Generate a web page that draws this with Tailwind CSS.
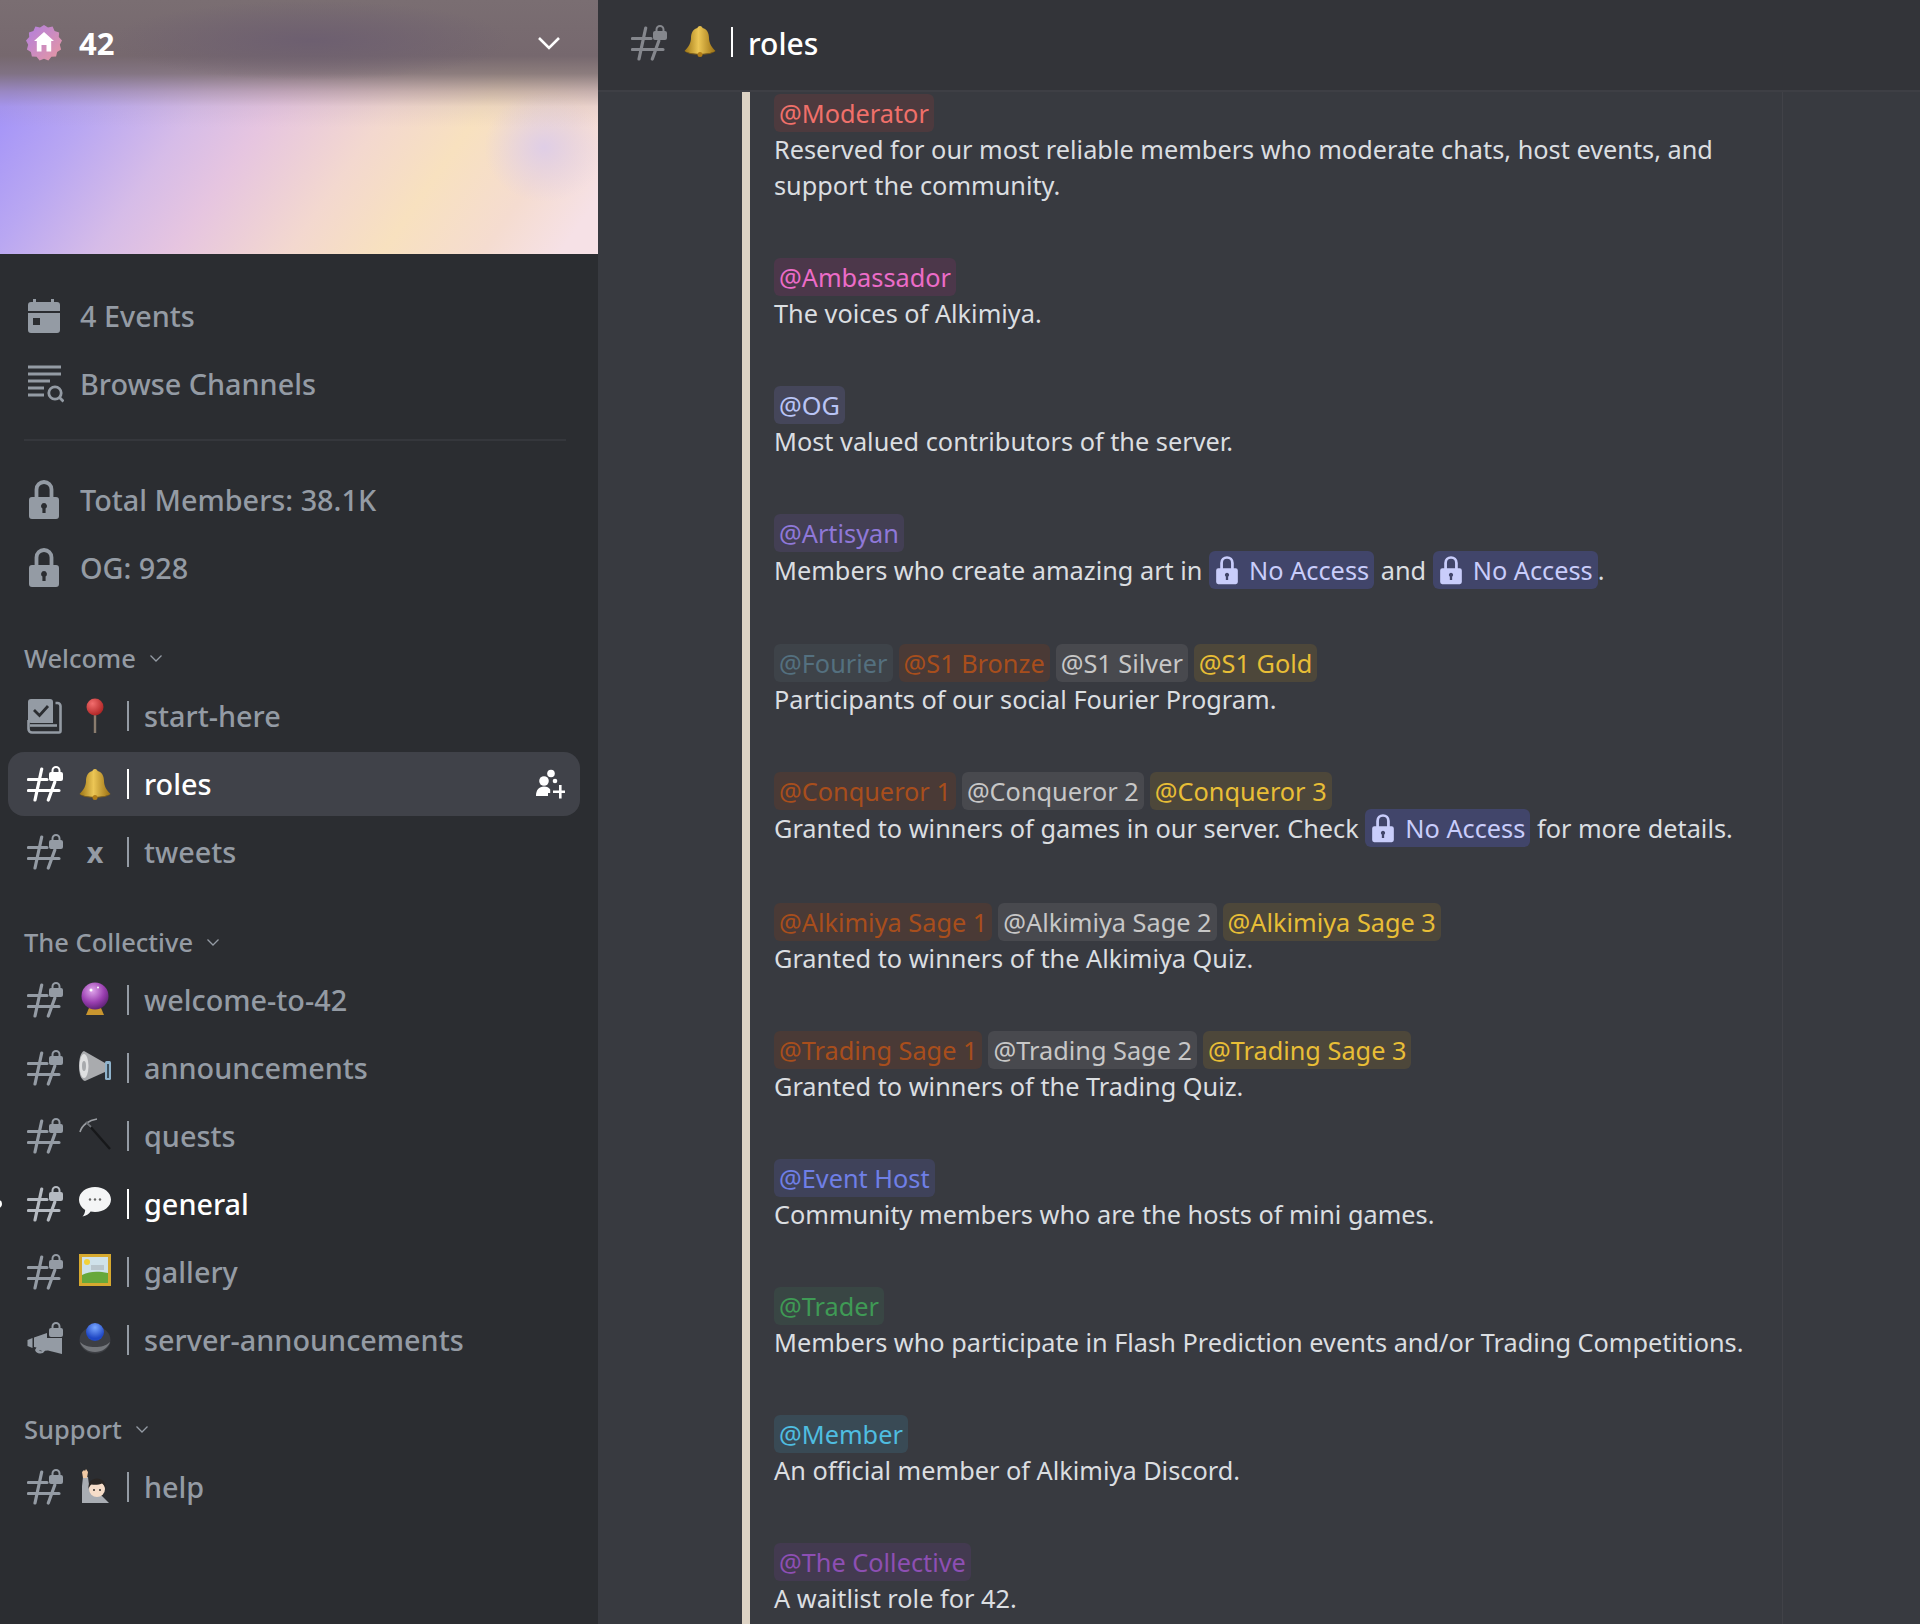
<!DOCTYPE html>
<html lang="en">
<head>
  <meta charset="UTF-8" />
  <title>roles</title>
  <script src="https://cdn.jsdelivr.net/npm/@tailwindcss/browser@4"></script>
</head>
<body class="bg-[#383a40] font-['Noto_Sans',sans-serif] overflow-hidden">
  <!-- shared icons -->
  <svg class="absolute w-0 h-0">
    <defs>
      <linearGradient id="bl" x1="0" y1="0" x2="1" y2="0"><stop offset="0" stop-color="#9c7414"/><stop offset=".45" stop-color="#ecc655"/><stop offset="1" stop-color="#9a6f12"/></linearGradient>
    </defs>
    <symbol id="lockhash" viewBox="0 0 36 36">
      <path d="M1.500 13.500H20M1.500 24.500H32M14.700 3L8 34M27.800 16L21.300 34" fill="none" stroke="currentColor" stroke-width="3.200" stroke-linecap="round"/>
      <path d="M24.500 6V4.500a4.500 4.500 0 0 1 9 0V6h0.500a2 2 0 0 1 2 2v5a2 2 0 0 1-2 2H24a2 2 0 0 1-2-2V8a2 2 0 0 1 2-2zM26.500 6h5V4.500a2.500 2.500 0 0 0-5 0z" fill="currentColor" fill-rule="evenodd"/>
    </symbol>
    <symbol id="lock" viewBox="0 0 36 40">
      <path d="M10.500 19V9.500a7.500 7.500 0 0 1 15 0V19" fill="none" stroke="currentColor" stroke-width="3.800"/>
      <path d="M6 17h24a3 3 0 0 1 3 3v16a3 3 0 0 1-3 3H6a3 3 0 0 1-3-3V20a3 3 0 0 1 3-3zM18 23a3 3 0 0 0-1.600 5.500V33h3.200v-4.500A3 3 0 0 0 18 23z" fill="currentColor" fill-rule="evenodd"/>
    </symbol>
    <symbol id="chev" viewBox="0 0 16 16">
      <path d="M2.500 5.500L8 11l5.500-5.500" fill="none" stroke="currentColor" stroke-width="1.300"/>
    </symbol>
    <symbol id="bell" viewBox="0 0 32 32">
      <path d="M16 1c1.500 0 2.500 1 2.500 2 4.500 1 6.500 5 6.500 10 0 5 2.500 9 6.500 13-3 2-9 3-15.500 3S3.500 28 .5 26c4-4 6.500-8 6.500-13 0-5 2-9 6.500-10 0-1 1-2 2.500-2z" fill="url(#bl)"/>
      <path d="M.5 26c3 2 9 2.800 15.500 2.800S28.500 28 31.500 26c-3 3-9 3.500-15.500 3.500S3.500 29 .5 26z" fill="#8a6410"/>
      <circle cx="16" cy="29.500" r="2.500" fill="#b07c18"/>
    </symbol>
  </svg>

  <div class="flex h-[1624px] w-[1920px]">
    <!-- sidebar -->
    <aside class="w-[598px] shrink-0 bg-[#2b2d31] text-[#949ba4] text-[28.8px] font-medium">
      <div class="relative h-[254px] bg-[radial-gradient(ellipse_200px_40px_at_52%_16%,#6d5f70_0%,#6d5f7000_100%),linear-gradient(180deg,#7a6e72_0%,#76686e_22%,#7a6c70d9_29%,#8c788273_36%,#aa96aa26_42%,#aa96aa00_50%),radial-gradient(ellipse_60px_55px_at_91%_58%,#dfcee6_0%,#dfcee600_100%),linear-gradient(125deg,#a494f8_10%,#b9a7f2_22%,#d6bce8_35%,#e6c5e0_45%,#f3d8cf_60%,#f8e1bf_72%,#f5dcd0_85%,#f6e1e6_95%)]">
        <div class="flex h-[86px] items-center pl-[26px] pr-[37px]">
          <svg class="w-[36px] h-[36px]" viewBox="0 0 36 36">
            <defs><linearGradient id="bd" x1="0" y1="0" x2="1" y2="1"><stop offset="0" stop-color="#b07fe0"/><stop offset="1" stop-color="#e898a0"/></linearGradient></defs>
            <path d="M18 0l4 2.600 4.600-1 2 4.300 4.500 1.500-.3 4.700 3.200 3.500-2.200 4.200 1.300 4.600-4 2.500-1 4.600-4.700.3-3 3.600L18 33.700l-4.400 1.700-3-3.600-4.700-.3-1-4.600-4-2.500 1.300-4.600L0 15.600l3.200-3.500-.3-4.700L7.400 5.900l2-4.300 4.600 1z" fill="url(#bd)"/>
            <path d="M18 7l10 9h-2.800v10.500h-4.700v-6.500h-5v6.500h-4.700V16H8z" fill="#fff"/>
          </svg>
          <span class="ml-[17px] text-[31px] font-bold text-white">42</span>
          <svg class="ml-auto w-[24px] h-[16px] text-white" viewBox="0 0 24 16"><path d="M2 3l10 10L22 3" fill="none" stroke="currentColor" stroke-width="2.600"/></svg>
        </div>
      </div>

      <div class="pt-[28px]">
        <div class="flex h-[68px] items-center pl-[27px]">
          <svg class="w-[34px] h-[36px] text-[#949ba4]" viewBox="0 0 34 36" fill="currentColor">
            <path d="M6 1h3v4H6zM24 1h3v4h-3z"/>
            <path d="M4 4h26a3 3 0 0 1 3 3v6H1V7a3 3 0 0 1 3-3zM1 15h32v17a3 3 0 0 1-3 3H4a3 3 0 0 1-3-3zM6 20v7h7v-7z" fill-rule="evenodd"/>
          </svg>
          <span class="ml-[19px]">4 Events</span>
        </div>
        <div class="flex h-[68px] items-center pl-[27px]">
          <svg class="w-[37px] h-[38px]" viewBox="0 0 37 38" fill="none" stroke="currentColor" stroke-width="2.800">
            <path d="M1 2h33M1 9h33M1 16h22M1 23h16M1 30h16"/>
            <circle cx="28" cy="28" r="6.200"/><path d="M32.500 32.500L36.500 36.500"/>
          </svg>
          <span class="ml-[16px]">Browse Channels</span>
        </div>
        <div class="mx-[24px] mt-[21px] h-[2px] bg-[#35373c] w-[542px]"></div>

        <div class="mt-[25px] flex h-[68px] items-center pl-[26px]">
          <svg class="w-[36px] h-[40px]"><use href="#lock"/></svg>
          <span class="ml-[18px]">Total Members: 38.1K</span>
        </div>
        <div class="flex h-[68px] items-center pl-[26px]">
          <svg class="w-[36px] h-[40px]"><use href="#lock"/></svg>
          <span class="ml-[18px]">OG: 928</span>
        </div>

        <div class="mt-[34px] flex h-[44px] items-center pl-[24px] text-[25.5px]">Welcome<svg class="ml-[12px] w-[16px] h-[16px]"><use href="#chev"/></svg></div>
        <div class="mt-[2px] flex h-[68px] items-center pl-[27px]">
          <svg class="w-[36px] h-[36px] shrink-0" viewBox="0 0 36 36" fill="none">
            <path d="M4 1h19a3 3 0 0 1 3 3v21H4a3 3 0 0 1-3-3V4a3 3 0 0 1 3-3z" fill="currentColor"/>
            <path d="M7 12l5.500 5.500L21 8" stroke="#2b2d31" stroke-width="2.800"/>
            <path d="M1.500 22v9a3.500 3.500 0 0 0 3.500 3.500h27a1.500 1.500 0 0 0 1.500-1.500V8a3 3 0 0 0-3-3h-2" stroke="currentColor" stroke-width="2.600"/>
            <path d="M3 27.500h27" stroke="currentColor" stroke-width="2.600"/>
          </svg>
          <span class="w-[64px] h-[36px] flex justify-center shrink-0">
            <svg class="w-[32px] h-[36px]" viewBox="0 0 32 36">
              <defs><radialGradient id="pin" cx=".35" cy=".3" r=".8"><stop offset="0" stop-color="#f26d6d"/><stop offset="1" stop-color="#a81d1d"/></radialGradient></defs>
              <rect x="14.800" y="14" width="2.400" height="21" fill="#8a7c6e"/>
              <circle cx="16" cy="9" r="8.500" fill="url(#pin)"/>
            </svg>
          </span>
          <span class="w-[2px] h-[30px] bg-current shrink-0"></span>
          <span class="ml-[15px]">start-here</span>
        </div>
        <div class="relative flex h-[64px] mx-[8px] my-[2px] w-[572px] items-center rounded-[16px] bg-[#404249] pl-[19px] text-white">
          <svg class="w-[36px] h-[36px] shrink-0"><use href="#lockhash"/></svg>
          <span class="w-[64px] h-[36px] flex justify-center shrink-0">
            <svg class="w-[32px] h-[32px] mt-[2px]"><use href="#bell"/></svg>
          </span>
          <span class="w-[2px] h-[30px] bg-current shrink-0"></span>
          <span class="ml-[15px]">roles</span>
          <svg class="ml-auto mr-[15px] w-[30px] h-[30px]" viewBox="0 0 30 30" fill="currentColor">
            <circle cx="16" cy="4.500" r="3.800"/><circle cx="20" cy="12" r="2.300"/><circle cx="9" cy="12" r="4.800"/>
            <path d="M1 27c0-6 3-9.500 8-9.500 3 0 5 1 6.200 3V24H13v3zM24 16h2.600v5.500H30V24h-3.400v5.500H24V24h-6v-2.500h6z"/>
          </svg>
        </div>
        <div class="flex h-[68px] items-center pl-[27px]">
          <svg class="w-[36px] h-[36px] shrink-0"><use href="#lockhash"/></svg>
          <span class="w-[64px] text-center font-bold shrink-0">x</span>
          <span class="w-[2px] h-[30px] bg-current shrink-0"></span>
          <span class="ml-[15px]">tweets</span>
        </div>

        <div class="mt-[34px] flex h-[44px] items-center pl-[24px] text-[25.5px]">The Collective<svg class="ml-[12px] w-[16px] h-[16px]"><use href="#chev"/></svg></div>
        <div class="mt-[2px] flex h-[68px] items-center pl-[27px]">
          <svg class="w-[36px] h-[36px] shrink-0"><use href="#lockhash"/></svg>
          <span class="w-[64px] h-[36px] flex justify-center shrink-0">
            <svg class="w-[30px] h-[34px]" viewBox="0 0 30 34">
              <defs><radialGradient id="ball" cx=".4" cy=".3" r=".8"><stop offset="0" stop-color="#e0a6ec"/><stop offset=".55" stop-color="#9a3fb0"/><stop offset="1" stop-color="#4e1a66"/></radialGradient></defs>
              <path d="M9 26h12l3 7H6z" fill="#c9962f"/>
              <circle cx="15" cy="14" r="13.500" fill="url(#ball)"/>
              <circle cx="11" cy="8" r="1.500" fill="#fff"/><circle cx="18" cy="5.500" r="1" fill="#fff"/>
            </svg>
          </span>
          <span class="w-[2px] h-[30px] bg-current shrink-0"></span>
          <span class="ml-[15px]">welcome-to-42</span>
        </div>
        <div class="flex h-[68px] items-center pl-[27px]">
          <svg class="w-[36px] h-[36px] shrink-0"><use href="#lockhash"/></svg>
          <span class="w-[64px] h-[36px] flex justify-center shrink-0">
            <svg class="w-[32px] h-[32px]" viewBox="0 0 32 32">
              <path d="M5 1L26 13v9L6 31C2 30 0 24 0 16S2 2 5 1z" fill="#a9abae"/>
              <ellipse cx="5" cy="16" rx="4.500" ry="12" fill="#dfe0e1"/>
              <ellipse cx="5" cy="16" rx="2" ry="5" fill="#a8aaad"/>
              <rect x="26" y="11" width="6" height="19" rx="1.500" fill="#8fb3cc"/>
              <rect x="28" y="14" width="2" height="14" fill="#3d4f5c"/>
            </svg>
          </span>
          <span class="w-[2px] h-[30px] bg-current shrink-0"></span>
          <span class="ml-[15px]">announcements</span>
        </div>
        <div class="flex h-[68px] items-center pl-[27px]">
          <svg class="w-[36px] h-[36px] shrink-0"><use href="#lockhash"/></svg>
          <span class="w-[64px] h-[36px] flex justify-center shrink-0">
            <svg class="w-[32px] h-[32px]" viewBox="0 0 32 32" fill="none">
              <path d="M1 14C3 7 10 2 18 1" stroke="#9b9ea3" stroke-width="1.600"/>
              <path d="M9 6l22 25" stroke="#17181a" stroke-width="2.400"/>
              <path d="M7 4l5 5" stroke="#6c7075" stroke-width="2"/>
            </svg>
          </span>
          <span class="w-[2px] h-[30px] bg-current shrink-0"></span>
          <span class="ml-[15px]">quests</span>
        </div>
        <div class="relative flex h-[68px] items-center pl-[27px]">
          <span class="absolute left-[-6px] top-[30px] w-[8px] h-[8px] rounded-full bg-white"></span>
          <svg class="w-[36px] h-[36px] shrink-0 text-[#b5bac1]"><use href="#lockhash"/></svg>
          <span class="w-[64px] h-[36px] flex justify-center shrink-0">
            <svg class="w-[32px] h-[32px]" viewBox="0 0 32 32">
              <path d="M16 1c8.800 0 16 5.400 16 12.500S24.800 26 16 26c-1.500 0-3-.2-4.400-.5C10 28 7 30 3.500 30.500c1.500-1.500 2.500-3.500 2.700-6.500C2.400 21.600 0 17.900 0 13.500 0 6.400 7.200 1 16 1z" fill="#f4f5f6"/>
              <circle cx="11" cy="13.500" r="1.200" fill="#666"/><circle cx="16" cy="13.500" r="1.200" fill="#666"/><circle cx="21" cy="13.500" r="1.200" fill="#666"/>
            </svg>
          </span>
          <span class="w-[2px] h-[30px] bg-white shrink-0"></span>
          <span class="ml-[15px] text-white">general</span>
        </div>
        <div class="flex h-[68px] items-center pl-[27px]">
          <svg class="w-[36px] h-[36px] shrink-0"><use href="#lockhash"/></svg>
          <span class="w-[64px] h-[36px] flex justify-center shrink-0">
            <svg class="w-[32px] h-[32px]" viewBox="0 0 32 32">
              <rect width="32" height="32" fill="#d6a92f"/>
              <rect x="3" y="3" width="26" height="26" fill="#cfe2ea"/>
              <path d="M3 21c8-4 16-4 26-2v10H3z" fill="#67a83a"/>
              <circle cx="8" cy="8" r="3" fill="#f2d23a"/>
              <path d="M12 11h13v5H12z" fill="#b9c6cc"/>
            </svg>
          </span>
          <span class="w-[2px] h-[30px] bg-current shrink-0"></span>
          <span class="ml-[15px]">gallery</span>
        </div>
        <div class="flex h-[68px] items-center pl-[27px]">
          <svg class="w-[36px] h-[36px] shrink-0" viewBox="0 0 36 36" fill="currentColor">
            <path d="M0.500 18l5-2v10l-5-2zM7 15.500L20 11v5h15v16L21 28.500l-3 .2a5.500 5.500 0 0 1-10-.8l1.500-2.400L7 25zM12 28a2.800 2.800 0 0 0 3.200 1z"/>
            <path d="M24.500 6V4.500a4.500 4.500 0 0 1 9 0V6h0.500a2 2 0 0 1 2 2v5a2 2 0 0 1-2 2H24a2 2 0 0 1-2-2V8a2 2 0 0 1 2-2zM26.500 6h5V4.500a2.500 2.500 0 0 0-5 0z" fill-rule="evenodd"/>
          </svg>
          <span class="w-[64px] h-[36px] flex justify-center shrink-0">
            <svg class="w-[32px] h-[32px]" viewBox="0 0 32 32">
              <defs><radialGradient id="tb" cx=".5" cy=".25" r=".6"><stop offset="0" stop-color="#78a6ff"/><stop offset="1" stop-color="#1f47c4"/></radialGradient></defs>
              <ellipse cx="16" cy="18" rx="15.500" ry="13.500" fill="#3d3f44"/>
              <path d="M1 20c2 6 8 10 15 10s13-4 15-10c-4 4-9 5-15 5S5 24 1 20z" fill="#73767b"/>
              <ellipse cx="16" cy="10" rx="9" ry="9" fill="url(#tb)"/>
            </svg>
          </span>
          <span class="w-[2px] h-[30px] bg-current shrink-0"></span>
          <span class="ml-[15px]">server-announcements</span>
        </div>

        <div class="mt-[33px] flex h-[44px] items-center pl-[24px] text-[25.5px]">Support<svg class="ml-[12px] w-[16px] h-[16px]"><use href="#chev"/></svg></div>
        <div class="mt-[2px] flex h-[68px] items-center pl-[27px]">
          <svg class="w-[36px] h-[36px] shrink-0"><use href="#lockhash"/></svg>
          <span class="w-[64px] h-[36px] flex justify-center shrink-0">
            <svg class="w-[30px] h-[34px]" viewBox="0 0 30 34">
              <path d="M2 34V17L3 8l5 0 1 8 4 6 8 4 8 8z" fill="#a9adb3"/>
              <path d="M3 9L2 3l2-2 1 1 1-2 2 3-1 6z" fill="#f0c9a4"/>
              <circle cx="17" cy="20" r="8" fill="#f6ddc9"/>
              <path d="M8.500 19.500C8 13 12 9.500 17 9.500s9 3.500 8.500 10c-1-2.500-2-4-3.500-5-2 1.500-9 1.500-10.500 1-1.500 1-2.500 2.500-3 4.500z" fill="#2a2624"/>
              <circle cx="14" cy="21" r="1" fill="#33302e"/><circle cx="20" cy="21" r="1" fill="#33302e"/>
            </svg>
          </span>
          <span class="w-[2px] h-[30px] bg-current shrink-0"></span>
          <span class="ml-[15px]">help</span>
        </div>
      </div>
    </aside>

    <!-- main -->
    <main class="flex-1 min-w-0 flex flex-col text-[25.3px] text-[#dbdee1]">
      <header class="h-[92px] shrink-0 flex items-start bg-[#333439] border-b-2 border-[#3e3f45] pl-[33px] pt-[25px]">
        <svg class="w-[36px] h-[36px] text-[#85878d]"><use href="#lockhash"/></svg>
        <span class="ml-[17px] w-[32px] h-[36px] flex justify-center">
          <svg class="w-[32px] h-[32px]"><use href="#bell"/></svg>
        </span>
        <span class="ml-[15px] mt-[2px] w-[2px] h-[30px] bg-white"></span>
        <span class="ml-[15px] mt-[-4px] text-[30px] font-medium text-white">roles</span>
      </header>

      <div class="flex-1 min-h-0 pl-[144px]">
        <div class="w-[1041px] h-full border-l-8 border-r border-l-[#dcd2c4] border-r-[#414248] pl-[24px] pt-[2px]">
          <section class="mb-[54px]">
            <div class="h-[38px] flex gap-[6px]"><span class="px-[5px] rounded-[6px] h-[38px] leading-[38px] text-[#f0706a] bg-[#4d3a3e]">@Moderator</span></div>
            <p class="leading-[36px] -mt-px pb-px">Reserved for our most reliable members who moderate chats, host events, and<br>support the community.</p>
          </section>
          <section class="mb-[54px]">
            <div class="h-[38px] flex gap-[6px]"><span class="px-[5px] rounded-[6px] h-[38px] leading-[38px] text-[#ec6cc8] bg-[#4c374a]">@Ambassador</span></div>
            <p class="leading-[36px] -mt-px pb-px">The voices of Alkimiya.</p>
          </section>
          <section class="mb-[54px]">
            <div class="h-[38px] flex gap-[6px]"><span class="px-[5px] rounded-[6px] h-[38px] leading-[38px] text-[#b9c4f5] bg-[#45465a]">@OG</span></div>
            <p class="leading-[36px] -mt-px pb-px">Most valued contributors of the server.</p>
          </section>
          <section class="mb-[54px]">
            <div class="h-[38px] flex gap-[6px]"><span class="px-[5px] rounded-[6px] h-[38px] leading-[38px] text-[#8f78d8] bg-[#433f54]">@Artisyan</span></div>
            <p class="leading-[38px] -mt-px pb-px">Members who create amazing art in <span class="inline-flex items-center h-[38px] align-top px-[5px] rounded-[6px] bg-[#41456a] text-[#c9cdfb]"><svg class="w-[26px] h-[29px] mr-[9px]"><use href="#lock"/></svg>No Access</span> and <span class="inline-flex items-center h-[38px] align-top px-[5px] rounded-[6px] bg-[#41456a] text-[#c9cdfb]"><svg class="w-[26px] h-[29px] mr-[9px]"><use href="#lock"/></svg>No Access</span>.</p>
          </section>
          <section class="mb-[54px]">
            <div class="h-[38px] flex gap-[6px]">
              <span class="px-[5px] rounded-[6px] h-[38px] leading-[38px] text-[#54707f] bg-[#3e4349]">@Fourier</span>
              <span class="px-[5px] rounded-[6px] h-[38px] leading-[38px] text-[#a84e1c] bg-[#4a3a36]">@S1 Bronze</span>
              <span class="px-[5px] rounded-[6px] h-[38px] leading-[38px] text-[#c7c7c7] bg-[#48494e]">@S1 Silver</span>
              <span class="px-[5px] rounded-[6px] h-[38px] leading-[38px] text-[#e8be36] bg-[#4d473a]">@S1 Gold</span>
            </div>
            <p class="leading-[36px] -mt-px pb-px">Participants of our social Fourier Program.</p>
          </section>
          <section class="mb-[55px]">
            <div class="h-[38px] flex gap-[6px]">
              <span class="px-[5px] rounded-[6px] h-[38px] leading-[38px] text-[#a84e1c] bg-[#4a3a36]">@Conqueror 1</span>
              <span class="px-[5px] rounded-[6px] h-[38px] leading-[38px] text-[#c7c7c7] bg-[#48494e]">@Conqueror 2</span>
              <span class="px-[5px] rounded-[6px] h-[38px] leading-[38px] text-[#e8be36] bg-[#4d473a]">@Conqueror 3</span>
            </div>
            <p class="leading-[38px] -mt-px pb-px">Granted to winners of games in our server. Check <span class="inline-flex items-center h-[38px] align-top px-[5px] rounded-[6px] bg-[#41456a] text-[#c9cdfb]"><svg class="w-[26px] h-[29px] mr-[9px]"><use href="#lock"/></svg>No Access</span> for more details.</p>
          </section>
          <section class="mb-[54px]">
            <div class="h-[38px] flex gap-[6px]">
              <span class="px-[5px] rounded-[6px] h-[38px] leading-[38px] text-[#a84e1c] bg-[#4a3a36]">@Alkimiya Sage 1</span>
              <span class="px-[5px] rounded-[6px] h-[38px] leading-[38px] text-[#c7c7c7] bg-[#48494e]">@Alkimiya Sage 2</span>
              <span class="px-[5px] rounded-[6px] h-[38px] leading-[38px] text-[#e8be36] bg-[#4d473a]">@Alkimiya Sage 3</span>
            </div>
            <p class="leading-[36px] -mt-px pb-px">Granted to winners of the Alkimiya Quiz.</p>
          </section>
          <section class="mb-[54px]">
            <div class="h-[38px] flex gap-[6px]">
              <span class="px-[5px] rounded-[6px] h-[38px] leading-[38px] text-[#a84e1c] bg-[#4a3a36]">@Trading Sage 1</span>
              <span class="px-[5px] rounded-[6px] h-[38px] leading-[38px] text-[#c7c7c7] bg-[#48494e]">@Trading Sage 2</span>
              <span class="px-[5px] rounded-[6px] h-[38px] leading-[38px] text-[#e8be36] bg-[#4d473a]">@Trading Sage 3</span>
            </div>
            <p class="leading-[36px] -mt-px pb-px">Granted to winners of the Trading Quiz.</p>
          </section>
          <section class="mb-[54px]">
            <div class="h-[38px] flex gap-[6px]"><span class="px-[5px] rounded-[6px] h-[38px] leading-[38px] text-[#6f7fe6] bg-[#3f425a]">@Event Host</span></div>
            <p class="leading-[36px] -mt-px pb-px">Community members who are the hosts of mini games.</p>
          </section>
          <section class="mb-[54px]">
            <div class="h-[38px] flex gap-[6px]"><span class="px-[5px] rounded-[6px] h-[38px] leading-[38px] text-[#3f9a55] bg-[#394644]">@Trader</span></div>
            <p class="leading-[36px] -mt-px pb-px">Members who participate in Flash Prediction events and/or Trading Competitions.</p>
          </section>
          <section class="mb-[54px]">
            <div class="h-[38px] flex gap-[6px]"><span class="px-[5px] rounded-[6px] h-[38px] leading-[38px] text-[#4fbde0] bg-[#394a55]">@Member</span></div>
            <p class="leading-[36px] -mt-px pb-px">An official member of Alkimiya Discord.</p>
          </section>
          <section>
            <div class="h-[38px] flex gap-[6px]"><span class="px-[5px] rounded-[6px] h-[38px] leading-[38px] text-[#8d4fb3] bg-[#433a50]">@The Collective</span></div>
            <p class="leading-[36px] -mt-px pb-px">A waitlist role for 42.</p>
          </section>
        </div>
      </div>
    </main>
  </div>
</body>
</html>
